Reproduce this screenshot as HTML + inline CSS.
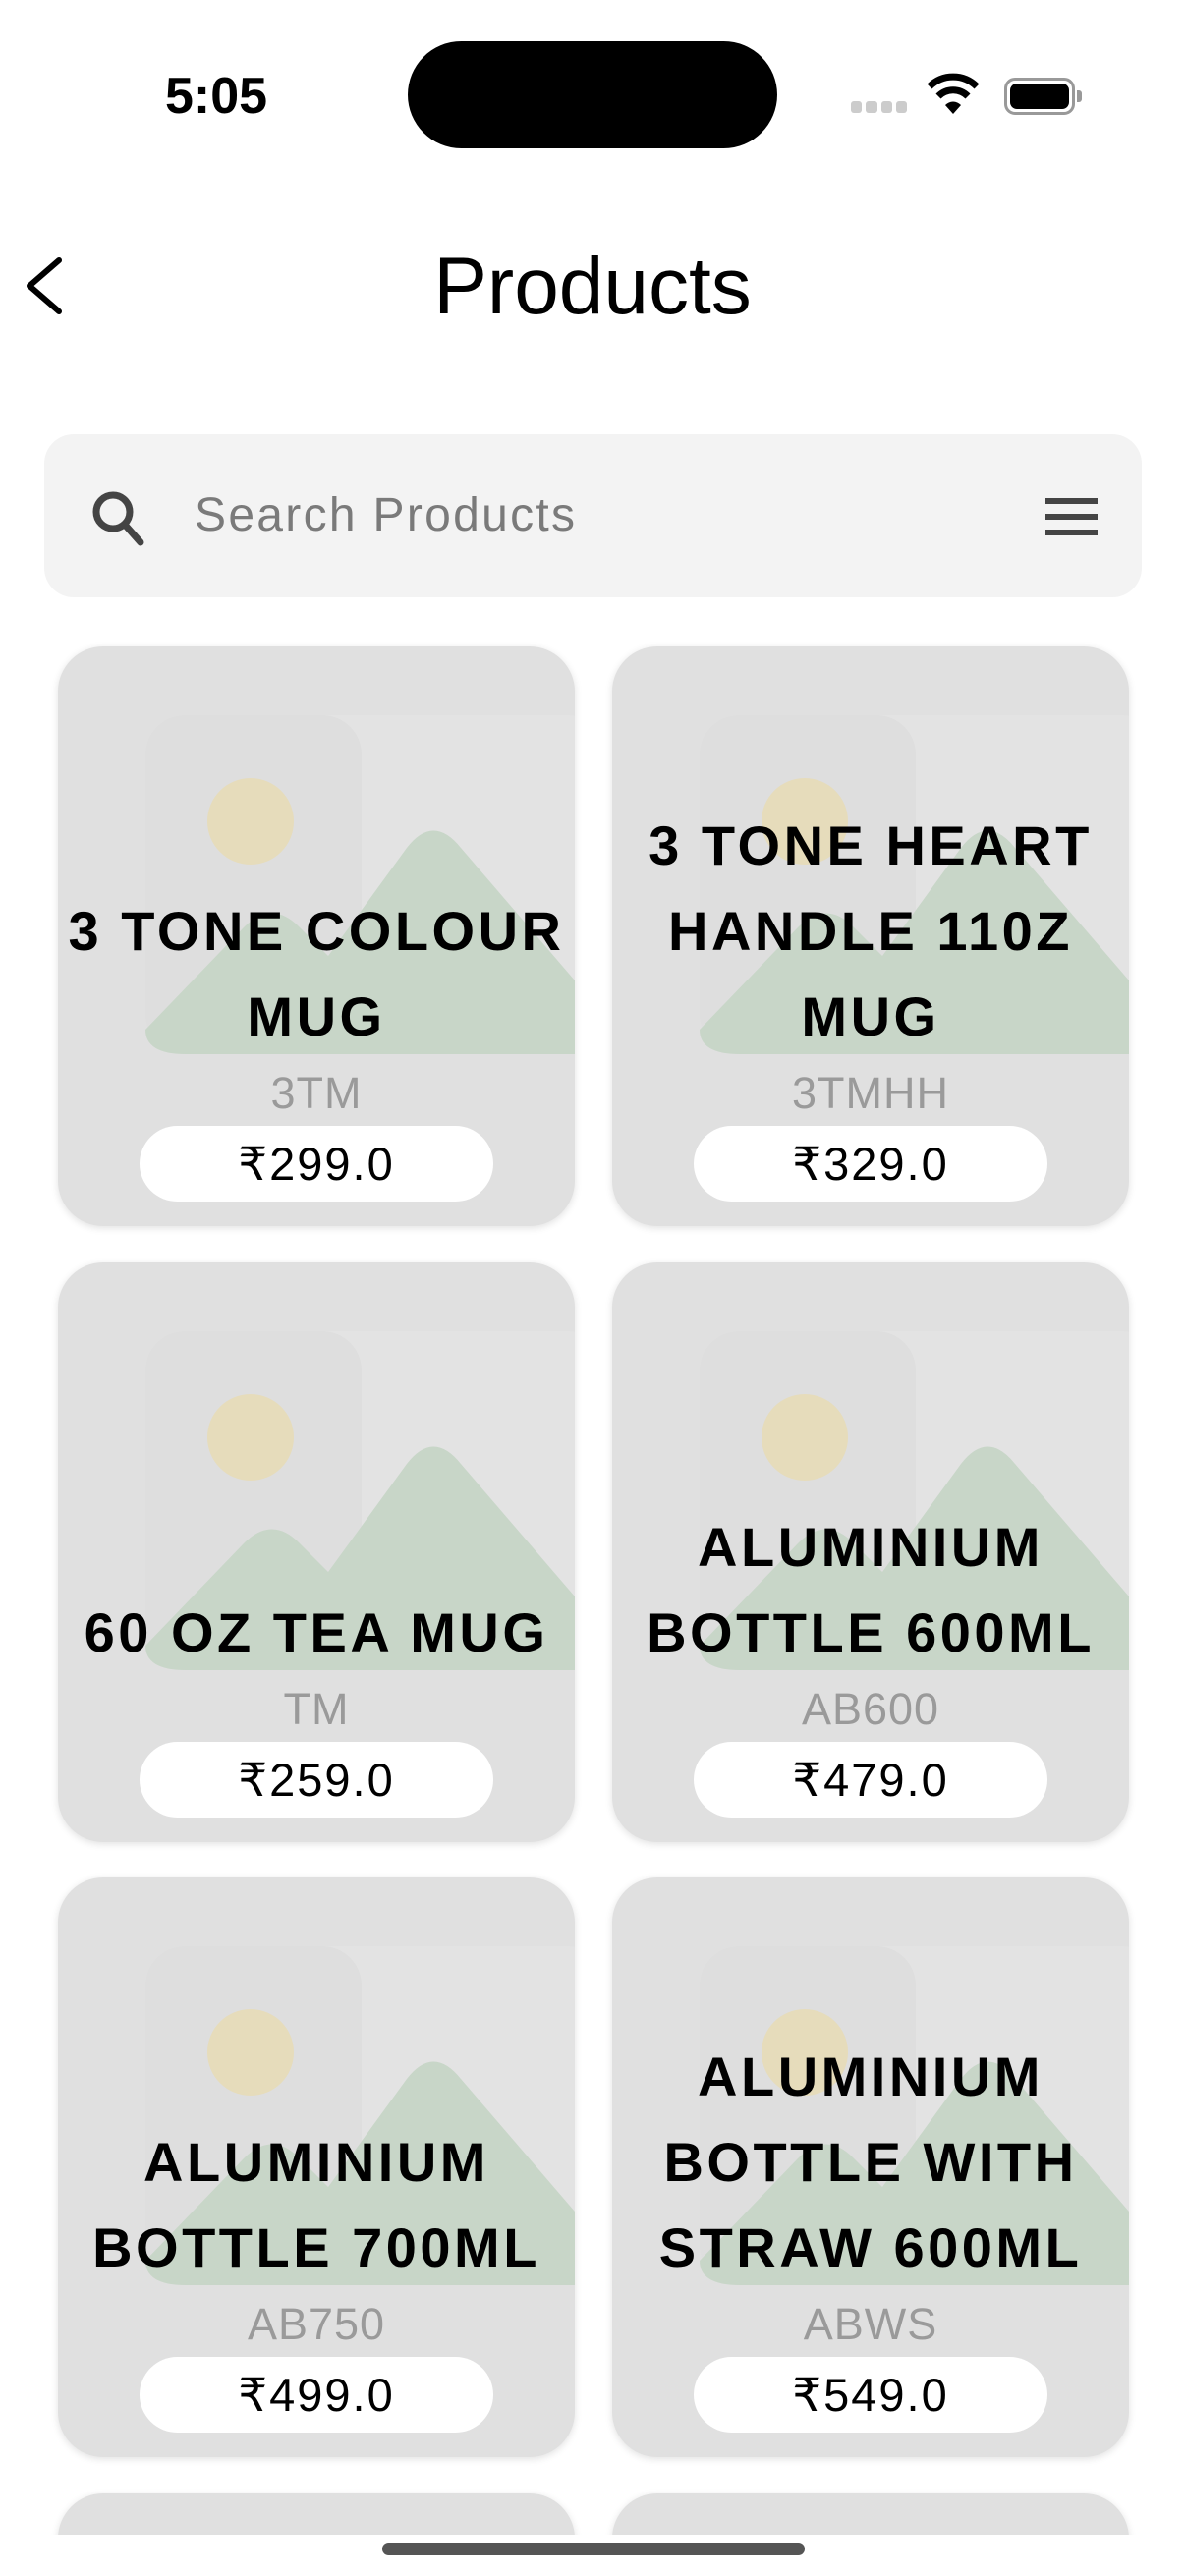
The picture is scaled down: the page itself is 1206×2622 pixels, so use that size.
<!DOCTYPE html>
<html><head><meta charset="utf-8"><style>
*{margin:0;padding:0;box-sizing:border-box}
html,body{width:1206px;height:2622px;overflow:hidden}
body{background:#fff;position:relative;font-family:"Liberation Sans",sans-serif}
.abs{position:absolute}
.card{position:absolute;width:526px;height:590px;background:#e0e0e0;border-radius:46px;box-shadow:0 2px 8px rgba(0,0,0,.12);overflow:hidden}
.card svg{position:absolute;left:0;top:0}
.content{position:absolute;left:0;right:0;bottom:25px;display:flex;flex-direction:column;align-items:center}
.t{font-weight:bold;font-size:56px;line-height:87px;letter-spacing:3.5px;text-align:center;color:#000;width:526px}
.c{font-size:45px;color:#9a9a9a;line-height:50px;margin-top:10px;letter-spacing:1px}
.p{margin-top:8px;width:360px;height:77px;border-radius:39px;background:#fff;font-size:47px;line-height:77px;text-align:center;letter-spacing:2px}
</style></head><body>
<div class="abs" style="left:168px;top:68px;font-size:52px;font-weight:bold">5:05</div>
<div class="abs" style="left:415px;top:42px;width:376px;height:109px;border-radius:55px;background:#000"></div>
<div class="abs" style="left:866px;top:103px;width:57px;height:12px;display:flex;gap:4px">
<i style="flex:1;background:#ccc;border-radius:3px"></i><i style="flex:1;background:#ccc;border-radius:3px"></i><i style="flex:1;background:#ccc;border-radius:3px"></i><i style="flex:1;background:#ccc;border-radius:3px"></i></div>
<svg class="abs" style="left:943px;top:74px" width="54" height="44" viewBox="0 0 54 44"><path d="M3 14 A34 34 0 0 1 51 14" stroke="#000" stroke-width="7" fill="none"/><path d="M12 24 A21 21 0 0 1 42 24" stroke="#000" stroke-width="7" fill="none"/><path d="M19 33 L27 42 L35 33 A11 11 0 0 0 19 33Z" fill="#000"/></svg>
<div class="abs" style="left:1022px;top:79px;width:72px;height:38px;border:3px solid #999;border-radius:11px;padding:3px"><div style="width:100%;height:100%;background:#000;border-radius:7px"></div></div>
<div class="abs" style="left:1096px;top:92px;width:5px;height:12px;background:#999;border-radius:0 3px 3px 0"></div>
<svg class="abs" style="left:22px;top:262px" width="44" height="58" viewBox="0 0 44 58"><path d="M38 3 L8 29 L38 55" stroke="#000" stroke-width="6" fill="none" stroke-linecap="round" stroke-linejoin="round"/></svg>
<div class="abs" style="left:0;width:1206px;top:242px;text-align:center;font-size:82px;line-height:100px">Products</div>
<div class="abs" style="left:45px;top:442px;width:1117px;height:166px;background:#f3f3f3;border-radius:30px"></div>
<svg class="abs" style="left:92px;top:498px" width="56" height="58" viewBox="0 0 56 58"><circle cx="23" cy="23" r="17" stroke="#444" stroke-width="7" fill="none"/><path d="M35 36 L51 54" stroke="#444" stroke-width="7" stroke-linecap="round"/></svg>
<div class="abs" style="left:198px;top:497px;font-size:48px;color:#7a7a7a;letter-spacing:2.3px">Search Products</div>
<div class="abs" style="left:1064px;top:507px;width:53px;height:6px;background:#444"></div>
<div class="abs" style="left:1064px;top:523px;width:53px;height:6px;background:#444"></div>
<div class="abs" style="left:1064px;top:539px;width:53px;height:6px;background:#444"></div>

<div class="card" style="left:59px;top:658px"><svg width="526" height="590"><rect x="89" y="70" width="470" height="345" rx="40" fill="#e3e3e3"/><rect x="89" y="70" width="220" height="345" rx="40" fill="#dedede"/><circle cx="196" cy="178" r="44" fill="#e6dcbb"/><path d="M89 390 L190 285 Q218 258 245 285 L275 315 L355 205 Q382 170 410 205 L526 340 L526 415 L130 415 Q89 415 89 390Z" fill="#c8d6c8"/></svg><div class="content"><div class="t">3 TONE COLOUR MUG</div><div class="c">3TM</div><div class="p">₹299.0</div></div></div>
<div class="card" style="left:623px;top:658px"><svg width="526" height="590"><rect x="89" y="70" width="470" height="345" rx="40" fill="#e3e3e3"/><rect x="89" y="70" width="220" height="345" rx="40" fill="#dedede"/><circle cx="196" cy="178" r="44" fill="#e6dcbb"/><path d="M89 390 L190 285 Q218 258 245 285 L275 315 L355 205 Q382 170 410 205 L526 340 L526 415 L130 415 Q89 415 89 390Z" fill="#c8d6c8"/></svg><div class="content"><div class="t">3 TONE HEART HANDLE 110Z MUG</div><div class="c">3TMHH</div><div class="p">₹329.0</div></div></div>
<div class="card" style="left:59px;top:1285px"><svg width="526" height="590"><rect x="89" y="70" width="470" height="345" rx="40" fill="#e3e3e3"/><rect x="89" y="70" width="220" height="345" rx="40" fill="#dedede"/><circle cx="196" cy="178" r="44" fill="#e6dcbb"/><path d="M89 390 L190 285 Q218 258 245 285 L275 315 L355 205 Q382 170 410 205 L526 340 L526 415 L130 415 Q89 415 89 390Z" fill="#c8d6c8"/></svg><div class="content"><div class="t">60 OZ TEA MUG</div><div class="c">TM</div><div class="p">₹259.0</div></div></div>
<div class="card" style="left:623px;top:1285px"><svg width="526" height="590"><rect x="89" y="70" width="470" height="345" rx="40" fill="#e3e3e3"/><rect x="89" y="70" width="220" height="345" rx="40" fill="#dedede"/><circle cx="196" cy="178" r="44" fill="#e6dcbb"/><path d="M89 390 L190 285 Q218 258 245 285 L275 315 L355 205 Q382 170 410 205 L526 340 L526 415 L130 415 Q89 415 89 390Z" fill="#c8d6c8"/></svg><div class="content"><div class="t">ALUMINIUM BOTTLE 600ML</div><div class="c">AB600</div><div class="p">₹479.0</div></div></div>
<div class="card" style="left:59px;top:1911px"><svg width="526" height="590"><rect x="89" y="70" width="470" height="345" rx="40" fill="#e3e3e3"/><rect x="89" y="70" width="220" height="345" rx="40" fill="#dedede"/><circle cx="196" cy="178" r="44" fill="#e6dcbb"/><path d="M89 390 L190 285 Q218 258 245 285 L275 315 L355 205 Q382 170 410 205 L526 340 L526 415 L130 415 Q89 415 89 390Z" fill="#c8d6c8"/></svg><div class="content"><div class="t">ALUMINIUM BOTTLE 700ML</div><div class="c">AB750</div><div class="p">₹499.0</div></div></div>
<div class="card" style="left:623px;top:1911px"><svg width="526" height="590"><rect x="89" y="70" width="470" height="345" rx="40" fill="#e3e3e3"/><rect x="89" y="70" width="220" height="345" rx="40" fill="#dedede"/><circle cx="196" cy="178" r="44" fill="#e6dcbb"/><path d="M89 390 L190 285 Q218 258 245 285 L275 315 L355 205 Q382 170 410 205 L526 340 L526 415 L130 415 Q89 415 89 390Z" fill="#c8d6c8"/></svg><div class="content"><div class="t">ALUMINIUM BOTTLE WITH STRAW 600ML</div><div class="c">ABWS</div><div class="p">₹549.0</div></div></div>
<div class="card" style="left:59px;top:2538px;height:84px;border-radius:46px 46px 0 0"></div>
<div class="card" style="left:623px;top:2538px;height:84px;border-radius:46px 46px 0 0"></div>
<div class="abs" style="left:0;top:2580px;width:1206px;height:42px;background:#fff"></div>
<div class="abs" style="left:389px;top:2588px;width:430px;height:13px;border-radius:7px;background:#555"></div>
</body></html>
